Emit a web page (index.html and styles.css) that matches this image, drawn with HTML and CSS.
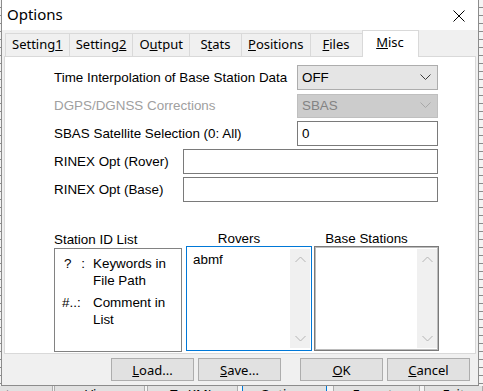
FILE: index.html
```html
<!DOCTYPE html>
<html lang="en">
<head>
    <meta charset="UTF-8">
    <meta name="viewport" content="width=device-width, initial-scale=1.0">
    <title>Options</title>
    <link rel="stylesheet" href="styles.css">
</head>
<body>
    <div id="options-dialog">
        <div class="titlebar">
            <span class="title">Options</span>
            <svg class="close-icon" width="12" height="12" viewBox="0 0 12 12">
                <path d="M0.5 0.5 L11.5 11.5 M11.5 0.5 L0.5 11.5" stroke="#000" stroke-width="1" fill="none"/>
            </svg>
        </div>

        <div class="tabs">
            <div class="tab">Setting<u>1</u></div>
            <div class="tab">Setting<u>2</u></div>
            <div class="tab">O<u>u</u>tput</div>
            <div class="tab">S<u>t</u>ats</div>
            <div class="tab"><u>P</u>ositions</div>
            <div class="tab"><u>F</u>iles</div>
            <div class="tab selected"><u>M</u>isc</div>
        </div>

        <div class="page">
            <div class="form-row">
                <span>Time Interpolation of Base Station Data</span>
                <div class="combo short">
                    <span>OFF</span>
                    <svg width="11" height="7" viewBox="0 0 11 7"><path d="M0.5 0.5 L5.5 5.5 L10.5 0.5" stroke="#3c3c3c" fill="none"/></svg>
                </div>
            </div>
            <div class="form-row disabled">
                <span>DGPS/DGNSS Corrections</span>
                <div class="combo short">
                    <span>SBAS</span>
                    <svg width="11" height="7" viewBox="0 0 11 7"><path d="M0.5 0.5 L5.5 5.5 L10.5 0.5" stroke="#a8a8a8" fill="none"/></svg>
                </div>
            </div>
            <div class="form-row">
                <span>SBAS Satellite Selection (0: All)</span>
                <div class="text-input short">0</div>
            </div>
            <div class="form-row">
                <span>RINEX Opt (Rover)</span>
                <div class="text-input long"></div>
            </div>
            <div class="form-row">
                <span>RINEX Opt (Base)</span>
                <div class="text-input long"></div>
            </div>

            <div class="lists">
                <div class="list-col station-col">
                    <div class="list-label">Station ID List</div>
                    <div class="list-box help-box">
                        <div class="help-key"><span>?</span><span>:</span></div>
                        <div>Keywords in<br>File Path</div>
                        <div class="help-key hash">#..:</div>
                        <div>Comment in<br>List</div>
                    </div>
                </div>
                <div class="list-col rover-col">
                    <div class="list-label centered">Rovers</div>
                    <div class="list-box focused">
                        <div class="list-items">abmf</div>
                        <div class="scrollbar">
                            <svg width="11" height="7" viewBox="0 0 11 7"><path d="M0.5 6 L5.5 1 L10.5 6" stroke="#b4b4b4" fill="none"/></svg>
                            <svg width="11" height="7" viewBox="0 0 11 7"><path d="M0.5 1 L5.5 6 L10.5 1" stroke="#b4b4b4" fill="none"/></svg>
                        </div>
                    </div>
                </div>
                <div class="list-col base-col">
                    <div class="list-label centered">Base Stations</div>
                    <div class="list-box plain">
                        <div class="list-items"></div>
                        <div class="scrollbar">
                            <svg width="11" height="7" viewBox="0 0 11 7"><path d="M0.5 6 L5.5 1 L10.5 6" stroke="#b4b4b4" fill="none"/></svg>
                            <svg width="11" height="7" viewBox="0 0 11 7"><path d="M0.5 1 L5.5 6 L10.5 1" stroke="#b4b4b4" fill="none"/></svg>
                        </div>
                    </div>
                </div>
            </div>
        </div>

        <div class="buttons">
            <button><u>L</u>oad...</button>
            <button><u>S</u>ave...</button>
            <button class="ok-btn"><u>O</u>K</button>
            <button><u>C</u>ancel</button>
        </div>
    </div>

    <div class="app-bar">
        <div class="app-btn first">Plot</div>
        <div class="app-btn view">View</div>
        <div class="app-btn kml">To KML</div>
        <div class="app-btn active">Options</div>
        <div class="app-btn exec">Execute</div>
        <div class="app-btn exit">Exit</div>
    </div>
</body>
</html>
```

FILE: styles.css
```css
* { box-sizing: border-box; }

body {
    margin: 0;
    width: 483px;
    height: 391px;
    overflow: hidden;
    font-family: 'Liberation Sans', Arial, sans-serif;
    font-size: 13.4px;
    color: #000;
    background-color: #f4f4f4;
    background-image: repeating-linear-gradient(to bottom, transparent 0 7px, #8c8c8c 7px 8px);
}

#options-dialog {
    width: 478px;
    height: 386px;
    margin-left: 1px;
    background: #f0f0f0;
    border: 1px solid #8c8c8c;
    border-top: none;
    display: flex;
    flex-direction: column;
}

.titlebar {
    height: 30px;
    flex: none;
    background: #fff;
    display: flex;
    align-items: center;
    justify-content: space-between;
    padding: 0 13px 0 5px;
}
.title {
    font-family: 'Noto Sans', sans-serif;
    font-size: 15px;
    margin-top: -2px;
}
.close-icon { margin-top: 1px; }

.tabs {
    height: 26px;
    flex: none;
    display: flex;
    align-items: flex-end;
    padding-left: 3px;
    position: relative;
    z-index: 1;
}
.tab {
    height: 23px;
    min-width: 53px;
    padding: 0 6px;
    border: 1px solid #d9d9d9;
    border-bottom: none;
    margin-right: -1px;
    background: #f0f0f0;
    font-family: 'Noto Sans', sans-serif;
    font-size: 13px;
    line-height: 21px;
    text-align: center;
    color: #000;
}
.tab.selected {
    height: 27px;
    min-width: 57px;
    margin-bottom: -1px;
    background: #fff;
    line-height: 22px;
}

.page {
    height: 298px;
    flex: none;
    margin: 0 2px;
    background: #fff;
    border: 1px solid #d9d9d9;
    padding: 8px 0 0 49px;
}

.form-row {
    width: 384px;
    height: 25px;
    margin-bottom: 3px;
    display: flex;
    align-items: center;
    justify-content: space-between;
}
.form-row.disabled { color: #a0a0a0; }

.combo {
    height: 25px;
    border: 1px solid #adadad;
    background: #e5e5e5;
    display: flex;
    align-items: center;
    justify-content: space-between;
    padding: 0 6px 0 4px;
}
.disabled .combo {
    background: #cccccc;
    border-color: #bfbfbf;
    color: #838383;
    height: 24px;
}
.short { width: 141px; }
.long { width: 255px; }

.text-input {
    height: 25px;
    border: 1px solid #7a7a7a;
    background: #fff;
    padding: 0 4px;
    line-height: 23px;
}

.lists {
    display: flex;
    margin-top: 30px;
}
.list-col {
    display: flex;
    flex-direction: column;
}
.station-col { width: 128px; }
.rover-col { width: 126px; margin-left: 4px; }
.base-col { width: 125px; margin-left: 2px; }

.list-label {
    height: 16px;
    line-height: 16px;
}
.list-label.centered {
    text-align: center;
    padding-right: 20px;
    margin-top: -1px;
    height: 16px;
}

.list-box {
    height: 104px;
    border: 1px solid #828282;
    display: flex;
}
.list-box.focused {
    height: 105px;
    margin-top: -1px;
    border-color: #0078d7;
}
.list-box.plain {
    height: 105px;
    margin-top: -1px;
    border-color: #7a7a7a;
    box-shadow: inset 0 0 0 1px #bcbcbc;
}

.help-box {
    display: grid;
    grid-template-columns: 32px 1fr;
    align-content: start;
    row-gap: 5px;
    padding: 6px 0 0 6px;
    line-height: 17px;
}
.help-key {
    display: flex;
    justify-content: space-between;
    align-items: flex-start;
    padding: 0 8px 0 3px;
}
.help-key.hash { padding-left: 1px; }

.list-items {
    flex: 1;
    padding: 4px 0 0 6px;
    line-height: 17px;
}

.scrollbar {
    width: 20px;
    margin: 2px 1px 2px 0;
    background: #f0f0f0;
    display: flex;
    flex-direction: column;
    justify-content: space-between;
    align-items: center;
    padding: 7px 0 6px;
}

.buttons {
    height: 31px;
    flex: none;
    display: flex;
    justify-content: flex-end;
    align-items: flex-start;
    gap: 4px;
    padding: 4px 8px 0 0;
}
button {
    width: 83px;
    height: 23px;
    margin: 0;
    padding: 0;
    border: 1px solid #adadad;
    background: #e1e1e1;
    font-family: 'Noto Sans', sans-serif;
    font-size: 13px;
    color: #000;
}
.ok-btn { margin-left: 15px; }

.app-bar {
    display: flex;
    height: 20px;
    font-family: 'Noto Sans', sans-serif;
    font-size: 13px;
    line-height: 14px;
}
.app-btn {
    background: #e1e1e1;
    border: 1px solid #adadad;
    border-top: none;
    text-align: center;
    padding-top: 1px;
}
.app-btn.first { text-align: right; padding-right: 42px; margin-left: -30px; width: 84px; }
.app-btn.view { width: 92px; margin-left: 1px; }
.app-btn.kml { width: 93px; margin-left: 2px; }
.app-btn.active { width: 86px; margin-left: 4px; border-color: #0078d7; }
.app-btn.exec { width: 89px; margin-left: 6px; }
.app-btn.exit { width: 60px; margin-left: 4px; }
```
